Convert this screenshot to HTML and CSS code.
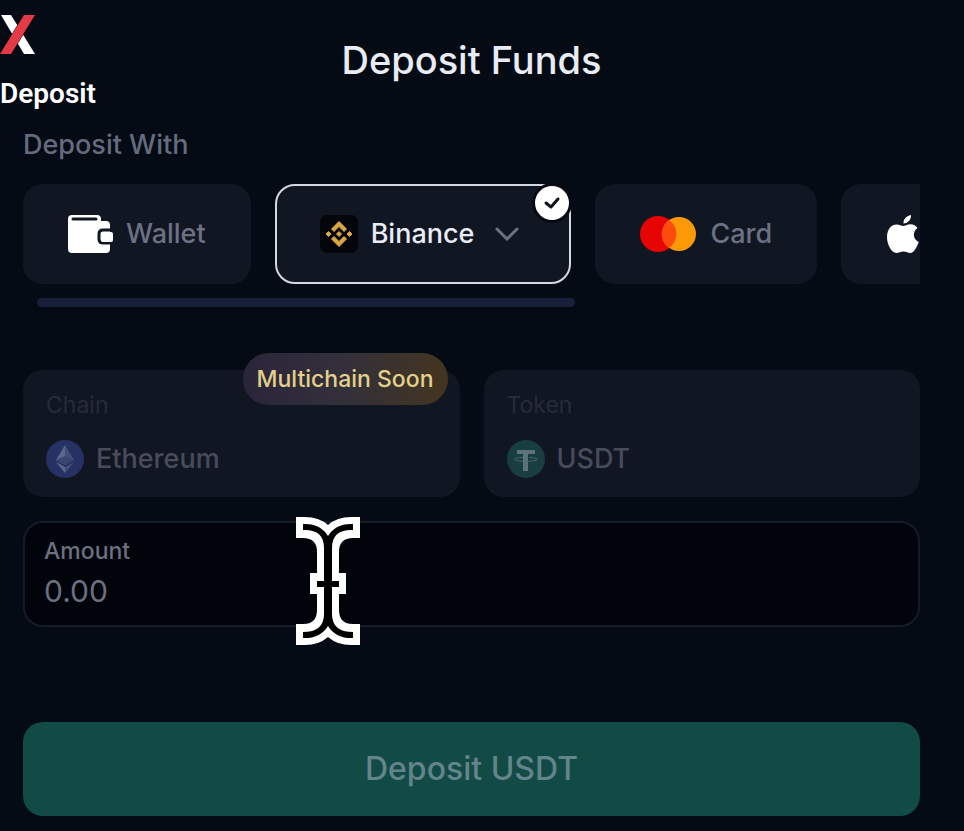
FILE: index.html
```html
<!DOCTYPE html>
<html lang="en">
<head>
<meta charset="utf-8">
<meta name="viewport" content="width=device-width, initial-scale=1">
<title>Deposit Funds</title>
<link rel="stylesheet" href="styles.css">
</head>
<body>
<header class="header">
  <div class="brand">
    <svg class="brand-logo" width="35" height="39" viewBox="0 0 35 39" aria-hidden="true">
      <path d="M1 0h10l24 39H24z" fill="#fff"/>
      <path d="M24 0h11L11 39H0z" fill="#e63946" stroke="#050b16" stroke-width="1" paint-order="stroke"/>
    </svg>
    <span class="brand-name">Deposit</span>
  </div>
  <h1 class="title">Deposit Funds</h1>
</header>
<main class="main">
  <h2 class="section-label">Deposit With</h2>
  <div class="methods">
    <button class="method" type="button">
      <svg width="45" height="38" viewBox="0 0 45 38" aria-hidden="true">
        <path d="M4 0h25q4 0 4 4v2h5q4 0 4 4v24q0 4-4 4H4q-4 0-4-4V4q0-4 4-4z" fill="#fff"/>
        <path d="M5 4h23" stroke="#111623" stroke-width="3" stroke-linecap="round"/>
        <path d="M45 15H35q-4 0-4 4v5q0 4 4 4h10" fill="none" stroke="#111623" stroke-width="3"/>
        <rect x="33" y="17" width="12" height="10" rx="2" fill="#fff"/>
      </svg>
      <span>Wallet</span>
    </button>
    <button class="method method-active" type="button" aria-pressed="true">
      <svg width="38" height="38" viewBox="0 0 38 38" aria-hidden="true">
        <rect width="38" height="38" rx="7" fill="#04060c"/>
        <g fill="#dba744" stroke="#dba744" stroke-linejoin="round">
          <path d="M19 6.500l7.500 7.500-2.500 2.500-5-5-5 5-2.500-2.500z"/>
          <path d="M19 31.500l7.500-7.500-2.500-2.500-5 5-5-5-2.500 2.500z"/>
          <path d="M19 16.500l2.500 2.500-2.500 2.500-2.500-2.500z"/>
          <path d="M8.500 16.500l2.500 2.500-2.500 2.500-2.500-2.500z"/>
          <path d="M29.500 16.500l2.500 2.500-2.500 2.500-2.500-2.500z"/>
        </g>
      </svg>
      <span>Binance</span>
      <svg class="chevron" width="24" height="14" viewBox="0 0 24 14" aria-hidden="true"><path d="M2 2l10 10L22 2" fill="none" stroke="#6c7183" stroke-width="3" stroke-linecap="round"/></svg>
      <svg class="check" width="40" height="40" viewBox="0 0 40 40" aria-hidden="true">
        <circle cx="20" cy="20" r="20" fill="#080a12"/>
        <circle cx="20" cy="20" r="17" fill="#fff"/>
        <path d="M14 20l5 4 7-8" fill="none" stroke="#10131c" stroke-width="3" stroke-linecap="round" stroke-linejoin="round"/>
      </svg>
    </button>
    <button class="method" type="button">
      <svg width="57" height="36" viewBox="0 0 57 36" aria-hidden="true">
        <circle cx="18" cy="18" r="18" fill="#e70503"/>
        <circle cx="39" cy="18" r="17" fill="#fb9a06"/>
        <path d="M29 4a17 17 0 0 1 0 28a17 17 0 0 1 0-28z" fill="#fc4b0d"/>
      </svg>
      <span>Card</span>
    </button>
    <button class="method" type="button" aria-label="Apple Pay">
      <svg width="34" height="39" viewBox="0 0 34 39" aria-hidden="true">
        <path d="M25 0c.5 4-3 8.500-7.500 8.500C17 4.500 20.500.8 25 0z" fill="#fff"/>
        <path d="M17 11c2 0 4-1.800 7.500-1.800 3 0 5.500 1.400 7 3.800-5.500 3.800-4.400 11.400 1.200 14-1.200 3.500-4.400 11-8.300 11-2.700 0-3.700-1.600-7-1.600s-4.400 1.600-7 1.600C5.500 38 1 29.500 1 22c0-8 4.700-12.500 9.500-12.500C13.500 9.500 15.500 11 17 11z" fill="#fff"/>
      </svg>
    </button>
  </div>
  <div class="scroll-thumb"></div>
  <div class="selectors">
    <button class="selector" type="button">
      <span class="selector-label">Chain</span>
      <span class="selector-value">
        <svg width="38" height="38" viewBox="0 0 38 38" aria-hidden="true">
          <circle cx="19" cy="19" r="19" fill="#273164"/>
          <path d="M19 5l-9 15 9 5z" fill="#5d668a"/>
          <path d="M19 5l9 15-9 5z" fill="#454e79"/>
          <path d="M10 20l9-4 9 4-9 5z" fill="#3b446f"/>
          <path d="M10 22l9 11v-6z" fill="#5d668a"/>
          <path d="M28 22l-9 11v-6z" fill="#454e79"/>
        </svg>
        <span>Ethereum</span>
      </span>
      <span class="soon">Multichain Soon</span>
    </button>
    <button class="selector" type="button">
      <span class="selector-label">Token</span>
      <span class="selector-value">
        <svg width="38" height="38" viewBox="0 0 38 38" aria-hidden="true">
          <circle cx="19" cy="19" r="19" fill="#183e42"/>
          <path d="M10 10h18v4h-7v17h-5V14h-6z" fill="#5b7379"/>
          <path d="M16 17.500c-5 0-8 .8-8 1.800s4 2 11 2 11-1 11-2-3-1.800-8-1.800" fill="none" stroke="#506a70"/>
        </svg>
        <span>USDT</span>
      </span>
    </button>
  </div>
  <div class="amount">
    <label class="amount-label" for="amount">Amount</label>
    <input class="amount-input" id="amount" type="text" inputmode="decimal" placeholder="0.00">
    <svg class="pointer" width="66" height="130" viewBox="0 0 66 130" aria-hidden="true">
      <path d="M1 1h9q14 0 23 8q9-8 23-8h9v21h-7q-14 0-14 14v21h7v21h-7v16q0 14 14 14h7v21h-9q-14 0-23-8q-9 8-23 8H1v-21h7q14 0 14-14V78h-7V57h7V36q0-14-14-14H1z" fill="#fff"/>
      <path d="M8 8q17-1 25 12q8-13 25-12v6q-21-1-21 18v33h7v6h-7v27q0 18 21 18v6q-17 1-25-12q-8 13-25 12v-6q21 0 21-18V71h-7v-6h7V32q0-19-21-18z" fill="#000"/>
    </svg>
  </div>
  <button class="submit" type="button">Deposit USDT</button>
</main>
</body>
</html>
```
FILE: styles.css
```css
* {
  box-sizing: border-box;
}

body {
  margin: 0;
  min-height: 100vh;
  background: #040b14;
  color: #e9ecf5;
  font-family: Inter, "Liberation Sans", sans-serif;
  font-size: 27px;
  font-weight: 500;
  line-height: 32px;
}

button,
input {
  font: inherit;
  color: inherit;
  border: 0;
  margin: 0;
}

svg {
  flex: none;
  display: block;
}

.header {
  display: grid;
  grid-template-columns: 1fr auto 1fr;
  align-items: start;
  padding: 15px 21px 0 0;
}

.brand {
  display: flex;
  flex-direction: column;
  gap: 24px;
}

.brand-name {
  color: #fff;
  font-family: Roboto, sans-serif;
  font-size: 28px;
  font-weight: 600;
}

.title {
  margin: 0;
  padding-top: 25px;
  font-size: 38px;
  font-weight: 500;
  line-height: 40px;
}

.main {
  padding: 19px 44px 15px 23px;
}

.section-label {
  margin: 0 0 23px;
  color: #656a7e;
  font-size: 27px;
  font-weight: 500;
}

.methods {
  display: flex;
  gap: 24px;
  overflow: hidden;
}

.method {
  flex: none;
  position: relative;
  display: flex;
  align-items: center;
  gap: 13px;
  height: 100px;
  padding: 0 45px;
  border-radius: 20px;
  background: #111623;
  color: #6c7183;
}

.method-active {
  padding: 0 50px 0 43px;
  border: 2px solid #d5d8e0;
  color: #e9ecf5;
}

.chevron {
  margin-left: 8px;
}

.check {
  position: absolute;
  top: -3px;
  right: -3px;
}

.scroll-thumb {
  width: 60%;
  height: 9px;
  margin: 14px 0 63px 14px;
  border-radius: 5px;
  background: #182039;
}

.selectors {
  display: grid;
  grid-template-columns: 1fr 1fr;
  gap: 24px;
}

.selector {
  position: relative;
  display: flex;
  flex-direction: column;
  gap: 19px;
  padding: 19px 23px;
  border-radius: 20px;
  background: #111623;
  text-align: left;
}

.selector-label {
  color: #262b3b;
  font-size: 23px;
  font-weight: 400;
}

.selector-value {
  display: flex;
  align-items: center;
  gap: 12px;
  color: #474b5b;
}

.soon {
  position: absolute;
  top: -17px;
  right: 12px;
  padding: 10px 14px;
  border-radius: 26px;
  background: linear-gradient(90deg, #2b253b, #33303a 50%, #43351f);
  color: #e3d08b;
  font-size: 23px;
}

.amount {
  position: relative;
  display: flex;
  flex-direction: column;
  margin: 24px 0 95px;
  padding: 12px 19px;
  border: 2px solid #161b29;
  border-radius: 20px;
  background: #02040c;
  color: #6c7080;
}

.amount-label {
  font-size: 23px;
}

.amount-input {
  width: 100%;
  height: 46px;
  padding: 2px 0 0;
  background: transparent;
  outline: none;
  font-size: 30px;
  font-weight: 400;
}

.amount-input::placeholder {
  color: #6c7080;
  opacity: 1;
}

.pointer {
  position: absolute;
  top: -7px;
  left: 270px;
}

.submit {
  display: block;
  width: 100%;
  padding: 31px;
  border-radius: 20px;
  background: #124b45;
  color: #62848a;
  font-size: 32px;
}
```
